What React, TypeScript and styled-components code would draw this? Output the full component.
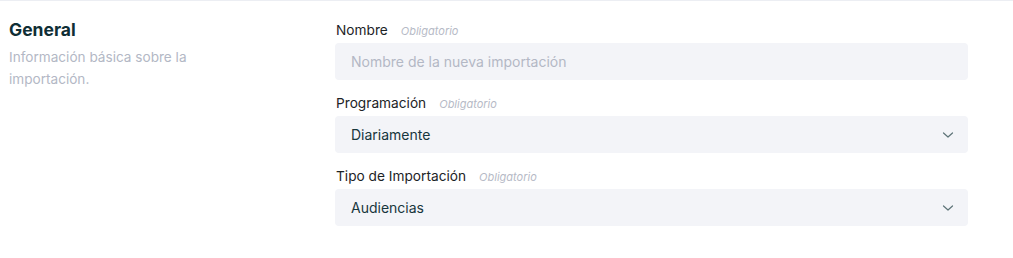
import React from "react";
import styled, { createGlobalStyle } from "styled-components";

const GlobalStyle = createGlobalStyle`
  html, body { margin: 0; padding: 0; background: #ffffff; }
  body { font-family: Inter, "Noto Sans", sans-serif; -webkit-font-smoothing: antialiased; }
  * { box-sizing: border-box; }
`;

const Section = styled.section`
  display: grid;
  grid-template-columns: 326px 633px;
  border-top: 1px solid #eceef3;
  padding: 19px 0 32px 9px;
  width: 1013px;
`;

const Intro = styled.div`
  display: flex;
  flex-direction: column;
`;

const Title = styled.h2`
  margin: 0;
  font-size: 17.5px;
  line-height: 20px;
  font-weight: 700;
  color: #0f2e35;
`;

const Description = styled.p`
  margin: 6px 0 0;
  width: 200px;
  font-size: 13.6px;
  line-height: 22px;
  color: #b3b8c5;
`;

const Fields = styled.div`
  display: flex;
  flex-direction: column;
  gap: 13px;
`;

const Field = styled.div`
  display: flex;
  flex-direction: column;
  gap: 3px;
`;

const LabelRow = styled.div`
  display: flex;
  align-items: baseline;
  gap: 13px;
  height: 20px;
  padding-left: 1px;
`;

const Label = styled.label`
  font-size: 13.7px;
  line-height: 20px;
  color: #1c2326;
`;

const Required = styled.span`
  font-size: 11px;
  font-style: italic;
  color: #b6bac6;
`;

const Box = styled.div<{ $placeholder?: boolean }>`
  display: flex;
  align-items: center;
  justify-content: space-between;
  height: 37px;
  padding: 0 14px 0 16px;
  background: #f3f4f8;
  border-radius: 4px;
  font-size: 14px;
  color: ${(p) => (p.$placeholder ? "#b3b8c5" : "#17363d")};
`;

const Chevron = () => (
  <svg width="12" height="8" viewBox="0 0 12 8" fill="none">
    <path d="M1.5 2 L6 6 L10.5 2" stroke="#5d7377" strokeWidth="1.2" strokeLinecap="round" strokeLinejoin="round" />
  </svg>
);

const fields = [
  { label: "Nombre", value: "Nombre de la nueva importación", placeholder: true, select: false },
  { label: "Programación", value: "Diariamente", placeholder: false, select: true },
  { label: "Tipo de Importación", value: "Audiencias", placeholder: false, select: true },
];

export default function App() {
  return (
    <>
      <GlobalStyle />
      <Section>
        <Intro>
          <Title>General</Title>
          <Description>Información básica sobre la importación.</Description>
        </Intro>
        <Fields>
          {fields.map((f) => (
            <Field key={f.label}>
              <LabelRow>
                <Label>{f.label}</Label>
                <Required>Obligatorio</Required>
              </LabelRow>
              <Box $placeholder={f.placeholder}>
                <span>{f.value}</span>
                {f.select && <Chevron />}
              </Box>
            </Field>
          ))}
        </Fields>
      </Section>
    </>
  );
}
